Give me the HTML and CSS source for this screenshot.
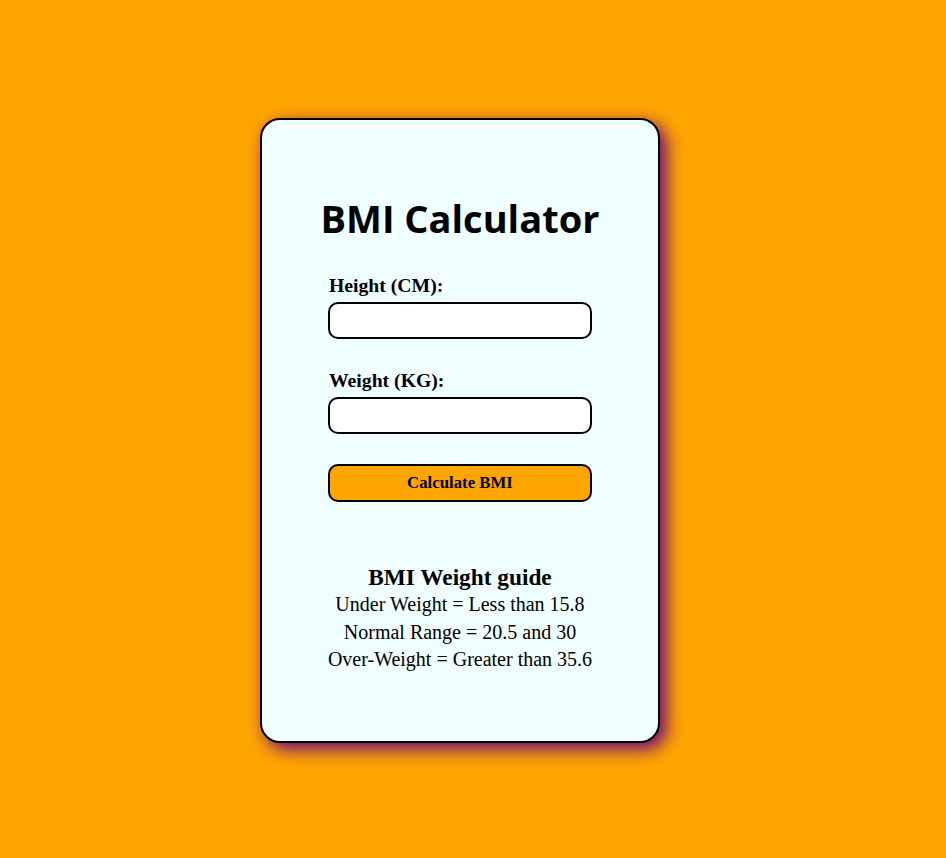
FILE: index.html
```html
<!DOCTYPE html>
<html>
<head>
<meta charset="utf-8">
<title>BMI Calculator</title>
<link rel="stylesheet" href="styles.css">
</head>
<body>
<div class="page">
  <div class="card">
    <h1 class="title">BMI Calculator</h1>
    <form class="form">
      <label class="label" for="height">Height (CM):</label>
      <input class="field" id="height" type="text">
      <label class="label label-gap" for="weight">Weight (KG):</label>
      <input class="field" id="weight" type="text">
      <button class="btn" type="button">Calculate BMI</button>
    </form>
    <div class="guide">
      <h3 class="guide-title">BMI Weight guide</h3>
      <p class="guide-line">Under Weight = Less than 15.8</p>
      <p class="guide-line">Normal Range = 20.5 and 30</p>
      <p class="guide-line">Over-Weight = Greater than 35.6</p>
    </div>
  </div>
</div>
</body>
</html>
```
FILE: styles.css
```css
html, body {
  margin: 0;
  padding: 0;
  background: #ffa500;
  height: 100%;
}
.page {
  display: flex;
  padding: 118px 0 0 260px;
}
.card {
  box-sizing: border-box;
  width: 400px;
  height: 625px;
  background: #f0ffff;
  border: 2px solid #000;
  border-radius: 20px;
  box-shadow: 6px 6px 18px 0 rgb(100, 0, 130);
  display: flex;
  flex-direction: column;
  align-items: center;
  font-family: "Liberation Serif", serif;
  color: #000;
}
.title {
  margin: 75px 0 0 0;
  font-family: "Open Sans", "Noto Sans", sans-serif;
  font-weight: 700;
  font-size: 38px;
  line-height: 46px;
}
.form {
  display: flex;
  flex-direction: column;
  width: 264px;
  margin-top: 32px;
}
.label {
  font-weight: 700;
  font-size: 19.7px;
  line-height: 24px;
  padding-left: 1px;
  margin-bottom: 5px;
}
.label-gap {
  margin-top: 29px;
}
.field {
  box-sizing: border-box;
  width: 264px;
  height: 37px;
  border: 2px solid #000;
  border-radius: 10px;
  background: #fff;
  margin: 0;
  padding: 0 8px;
}
.btn {
  box-sizing: border-box;
  width: 264px;
  height: 38px;
  margin-top: 30px;
  border: 2px solid #000;
  border-radius: 10px;
  background: #ffa500;
  font-family: "Liberation Serif", serif;
  font-weight: 700;
  font-size: 16.8px;
  color: #000;
}
.guide {
  margin-top: 61px;
  text-align: center;
}
.guide-title {
  margin: 0;
  font-size: 23.3px;
  line-height: 28px;
  font-weight: 700;
}
.guide-line {
  margin: 0;
  font-size: 20px;
  line-height: 27.5px;
}
```
